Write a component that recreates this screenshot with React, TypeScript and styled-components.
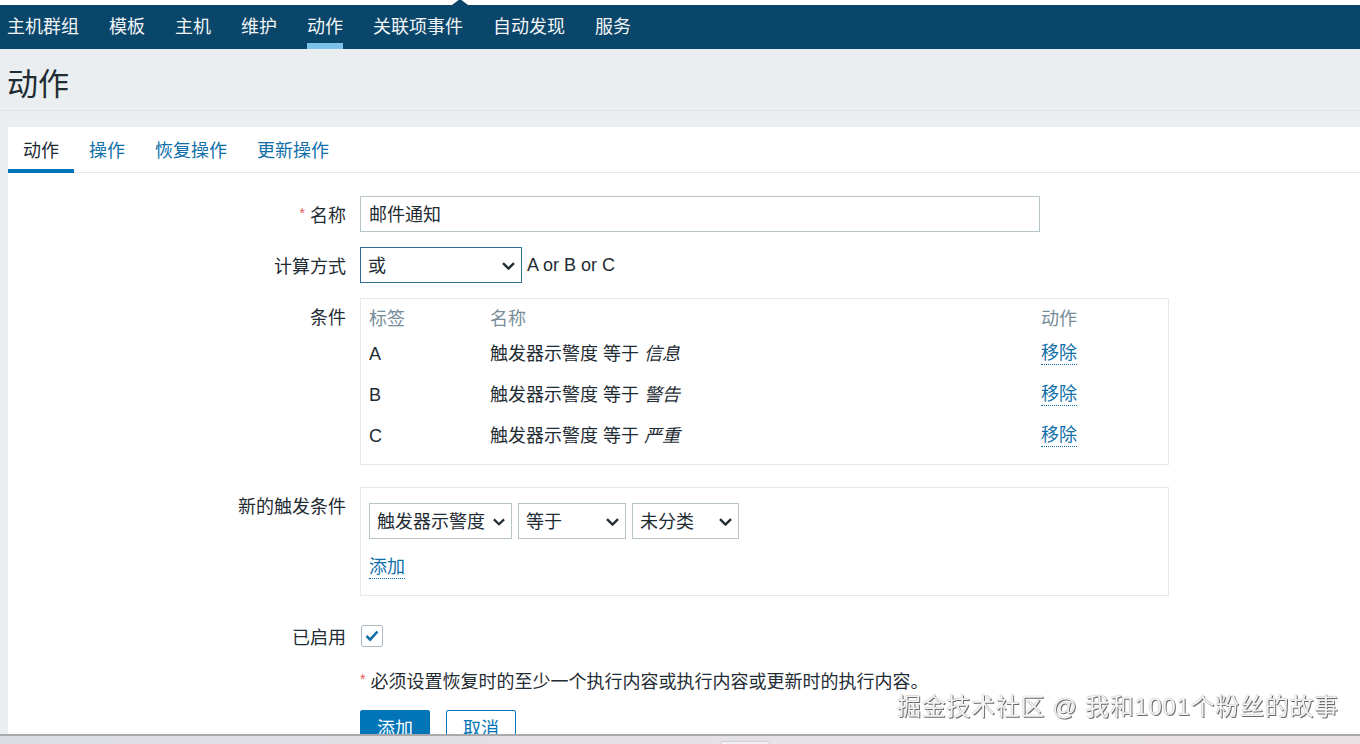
import React from 'react';
import styled, { createGlobalStyle } from 'styled-components';

const GlobalStyle = createGlobalStyle`
  html, body {
    margin: 0;
    padding: 0;
    background: #ebeef0;
    font-family: "Liberation Sans", "Noto Sans CJK SC", sans-serif;
    color: #1f2c33;
    overflow: hidden;
  }
`;

const Page = styled.div`
  width: 1360px;
  height: 744px;
  overflow: hidden;
  background: #ebeef0;
  padding-top: 5px;
  box-sizing: border-box;
  background-image: linear-gradient(#ffffff, #ffffff);
  background-size: 100% 5px;
  background-repeat: no-repeat;
`;

const TopNav = styled.nav`
  position: relative;
  height: 44px;
  background: #0a466a;
  display: flex;
  gap: 30px;
  padding-left: 7px;

  &::before {
    content: '';
    position: absolute;
    left: 452px;
    top: -6px;
    border-left: 8px solid transparent;
    border-right: 8px solid transparent;
    border-bottom: 6px solid #0a466a;
  }
`;

const NavItem = styled.div<{ $active?: boolean }>`
  position: relative;
  font-size: 18px;
  line-height: 44px;
  height: 44px;
  color: #f2f5f7;
  white-space: nowrap;

  &::after {
    content: '';
    display: ${(p) => (p.$active ? 'block' : 'none')};
    position: absolute;
    left: 0;
    right: 0;
    bottom: 0;
    height: 6px;
    background: #7cc3ea;
  }
`;

const Header = styled.header`
  height: 61px;
  box-sizing: content-box;
  border-bottom: 1px solid #dde2e5;
  display: flex;
  align-items: center;
  padding-left: 7px;
`;

const Title = styled.h1`
  margin: 11px 0 0 0;
  font-size: 31px;
  font-weight: 400;
  color: #1f2c33;
  line-height: 40px;
`;

const Panel = styled.main`
  margin: 16px 0 0 8px;
  background: #ffffff;
  height: 620px;
`;

const Tabs = styled.div`
  display: flex;
  height: 45px;
  border-bottom: 1px solid #e6e9eb;
`;

const Tab = styled.div<{ $active?: boolean }>`
  padding: 2px 15px 0 15px;
  font-size: 18px;
  line-height: 44px;
  color: ${(p) => (p.$active ? '#1f2c33' : '#0f6fa8')};
  border-bottom: 4px solid ${(p) => (p.$active ? '#0275b8' : 'transparent')};
  height: 40px;
  overflow: hidden;
`;

const Form = styled.div`
  padding-top: 23px;
`;

const FormRow = styled.div<{ $mb?: number }>`
  display: grid;
  grid-template-columns: 338px 1fr;
  column-gap: 14px;
  margin-bottom: ${(p) => p.$mb ?? 15}px;
`;

const Label = styled.div`
  text-align: right;
  font-size: 18px;
  line-height: 36px;
  height: 34px;
  padding-top: 2px;
  color: #1f2c33;
  white-space: nowrap;
`;

const Required = styled.span`
  color: #e45959;
  font-size: 14px;
  line-height: 0;
  vertical-align: 4px;
  margin-right: 5px;
`;

const TextInput = styled.div<{ $width: number }>`
  width: ${(p) => p.$width}px;
  height: 36px;
  box-sizing: border-box;
  border: 1px solid #b7c4ca;
  padding: 2px 8px 0 8px;
  font-size: 18px;
  line-height: 32px;
  overflow: hidden;
`;

const Inline = styled.div`
  display: flex;
  align-items: center;
  gap: 5px;
  font-size: 18px;
  height: 36px;
  line-height: 22px;
`;

const Select = styled.div<{ $width: number; $focused?: boolean }>`
  width: ${(p) => p.$width}px;
  height: 36px;
  box-sizing: border-box;
  border: 1px solid ${(p) => (p.$focused ? '#2f6f96' : '#b7c4ca')};
  padding: 1px 6px 0 7px;
  display: flex;
  align-items: center;
  justify-content: space-between;
  gap: 8px;
  font-size: 18px;
  line-height: 22px;
  white-space: nowrap;
  background: #fff;
  flex-shrink: 0;
`;

const Box = styled.div<{ $pad: string }>`
  width: 809px;
  box-sizing: border-box;
  border: 1px solid #e6e9eb;
  padding: ${(p) => p.$pad};
`;

const TableRow = styled.div<{ $head?: boolean }>`
  display: grid;
  grid-template-columns: 121px 1fr 119px;
  height: ${(p) => (p.$head ? 28 : 41)}px;
  align-items: center;
  font-size: 18px;
  line-height: 22px;
  color: ${(p) => (p.$head ? '#768d99' : '#1f2c33')};
`;

const Value = styled.em`
  font-style: italic;
`;

const Link = styled.span`
  color: #0f6fa8;
  border-bottom: 1px dotted #0f6fa8;
  line-height: 22px;
  justify-self: start;
  font-size: 18px;
`;

const SelectRow = styled.div`
  display: flex;
  gap: 6px;
`;

const AddRow = styled.div`
  margin-top: 14px;
  height: 28px;
  display: flex;
  align-items: center;
`;

const CheckCell = styled.div`
  height: 36px;
  display: flex;
  align-items: center;
`;

const Checkbox = styled.div`
  width: 22px;
  height: 22px;
  box-sizing: border-box;
  border: 1px solid #acbbc2;
  border-radius: 2px;
  margin-left: 1px;
  display: flex;
  align-items: center;
  justify-content: center;
`;

const Note = styled.div`
  font-size: 18px;
  line-height: 26px;
  height: 26px;
  white-space: nowrap;
`;

const Buttons = styled.div`
  display: flex;
  gap: 16px;
`;

const Button = styled.div<{ $primary?: boolean }>`
  width: 70px;
  height: 36px;
  box-sizing: border-box;
  border-radius: 2px;
  border: 1px solid #0275b8;
  background: ${(p) => (p.$primary ? '#0275b8' : '#ffffff')};
  color: ${(p) => (p.$primary ? '#ffffff' : '#0275b8')};
  font-size: 18px;
  line-height: 22px;
  padding-top: 2px;
  display: flex;
  align-items: center;
  justify-content: center;
`;

const Watermark = styled.div`
  position: fixed;
  left: 897px;
  top: 691px;
  font-size: 24px;
  line-height: 32px;
  color: #f3f3f3;
  letter-spacing: 0.7px;
  text-shadow: 1px 1px 0 #6b6b6b, 0 0 1px #8a8a8a;
  white-space: nowrap;
`;

const BottomStrip = styled.div`
  position: fixed;
  left: 0;
  right: 0;
  top: 734px;
  height: 10px;
  box-sizing: border-box;
  border-top: 2px solid #a9a9ab;
  background: linear-gradient(90deg, #dcdde4, #e6e2e6 60%, #e9e2e4);

  &::after {
    content: '';
    position: absolute;
    left: 720px;
    top: 5px;
    width: 48px;
    height: 8px;
    border: 1px solid #cfcfd4;
    border-radius: 3px;
    background: #f1f1f4;
  }
`;

const Chevron = () => (
  <svg width="13" height="8" viewBox="0 0 13 8" fill="none">
    <path d="M1 1.2L6.5 6.5L12 1.2" stroke="#1f2c33" strokeWidth="2.4" />
  </svg>
);

const CheckMark = () => (
  <svg width="14" height="12" viewBox="0 0 14 12" fill="none">
    <path d="M1.5 6L5.2 9.6L12.5 1.5" stroke="#0f6fa8" strokeWidth="2.6" />
  </svg>
);

const navItems = ['主机群组', '模板', '主机', '维护', '动作', '关联项事件', '自动发现', '服务'];
const tabs = ['动作', '操作', '恢复操作', '更新操作'];
const conditions = [
  { tag: 'A', value: '信息' },
  { tag: 'B', value: '警告' },
  { tag: 'C', value: '严重' },
];

const App: React.FC = function () {
  return (
    <Page>
      <GlobalStyle />
      <TopNav>
        {navItems.map((item) => (
          <NavItem key={item} $active={item === '动作'}>
            {item}
          </NavItem>
        ))}
      </TopNav>
      <Header>
        <Title>动作</Title>
      </Header>
      <Panel>
        <Tabs>
          {tabs.map((tab, index) => (
            <Tab key={tab} $active={index === 0}>
              {tab}
            </Tab>
          ))}
        </Tabs>
        <Form>
          <FormRow>
            <Label>
              <Required>*</Required>名称
            </Label>
            <TextInput $width={680}>邮件通知</TextInput>
          </FormRow>
          <FormRow>
            <Label>计算方式</Label>
            <Inline>
              <Select $width={162} $focused>
                或
                <Chevron />
              </Select>
              A or B or C
            </Inline>
          </FormRow>
          <FormRow $mb={22}>
            <Label>条件</Label>
            <Box $pad="6px 8px 8px 8px">
              <TableRow $head>
                <span>标签</span>
                <span>名称</span>
                <span>动作</span>
              </TableRow>
              {conditions.map((c) => (
                <TableRow key={c.tag}>
                  <span>{c.tag}</span>
                  <span>
                    触发器示警度 等于 <Value>{c.value}</Value>
                  </span>
                  <Link>移除</Link>
                </TableRow>
              ))}
            </Box>
          </FormRow>
          <FormRow $mb={22}>
            <Label>新的触发条件</Label>
            <Box $pad="15px 8px 14px 8px">
              <SelectRow>
                <Select $width={143}>
                  触发器示警度
                  <Chevron />
                </Select>
                <Select $width={108}>
                  等于
                  <Chevron />
                </Select>
                <Select $width={107}>
                  未分类
                  <Chevron />
                </Select>
              </SelectRow>
              <AddRow>
                <Link>添加</Link>
              </AddRow>
            </Box>
          </FormRow>
          <FormRow>
            <Label>已启用</Label>
            <CheckCell>
              <Checkbox>
                <CheckMark />
              </Checkbox>
            </CheckCell>
          </FormRow>
          <FormRow>
            <div />
            <Note>
              <Required>*</Required>必须设置恢复时的至少一个执行内容或执行内容或更新时的执行内容。
            </Note>
          </FormRow>
          <FormRow>
            <div />
            <Buttons>
              <Button $primary>添加</Button>
              <Button>取消</Button>
            </Buttons>
          </FormRow>
        </Form>
      </Panel>
      <Watermark>掘金技术社区 @ 我和1001个粉丝的故事</Watermark>
      <BottomStrip />
    </Page>
  );
};

export default App;
